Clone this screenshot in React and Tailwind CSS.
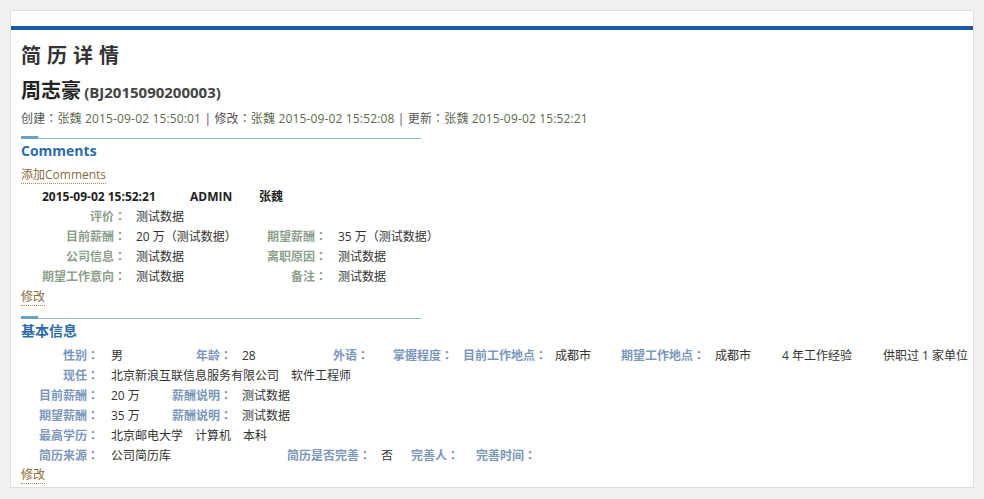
import React from 'react';

const font = { fontFamily: '"Open Sans", "Noto Sans CJK SC", sans-serif' };

// centred full-width colon, like the reference's Windows font
const C = () => (
  <span className="leading-[0]" style={{ fontFamily: '"Noto Sans CJK TC", sans-serif' }}>
    ：
  </span>
);

const Divider = () => (
  <div className="flex items-end w-[400px]">
    <div className="w-[17px] h-[3px] bg-[#6b9fcb]" />
    <div className="flex-1 h-px bg-[#8db5d6]" />
  </div>
);

// cell helpers for the table-like rows
const L = ({ w, c, children }) => (
  <span className={`shrink-0 text-right font-bold whitespace-nowrap ${c}`} style={{ width: w }}>
    {children}
    <C />
  </span>
);

const V = ({ w, pl = 10, children }) => (
  <span className="shrink-0 text-[#333] whitespace-nowrap" style={{ width: w, paddingLeft: pl }}>
    {children}
  </span>
);

const Row = ({ children }) => <div className="flex h-[20px] leading-[20px]">{children}</div>;

const cmt = 'text-[#8e9f8c]';
const base = 'text-[#7c97bc]';

const App = () => {
  return (
    <div className="h-[499px] bg-[#f0f0f0] px-[10px] pt-[10px] text-[12px]" style={font}>
      <div className="h-[478px] bg-white border border-[#dedede] pt-[15px] overflow-hidden">
        <div className="h-[4px] bg-[#1a5aa6]" />

        <div className="px-[10px]">
          <h1 className="mt-[13px] text-[20px] leading-[26px] font-bold tracking-[6px] text-[#333]">简历详情</h1>

          <div className="mt-[8px] leading-[28px] text-[#222]">
            <span className="text-[20px] font-bold">周志豪</span>{' '}
            <span className="text-[15px] font-bold text-[#444]">(BJ2015090200003)</span>
          </div>

          <div className="mt-[2px] h-[18px] leading-[18px] text-[#555] tracking-[0.15px]">
            创建<C /><span className="text-[#5b6a4d]">张魏 2015-09-02 15:50:01</span>{' '}
            <span className="text-[#5b3b6b]">|</span> 修改<C /><span className="text-[#5b6a4d]">张魏 2015-09-02 15:52:08</span>{' '}
            <span className="text-[#5b3b6b]">|</span> 更新<C /><span className="text-[#5b6a4d]">张魏 2015-09-02 15:52:21</span>
          </div>

          {/* Comments */}
          <div className="mt-[8px]">
            <Divider />
          </div>
          <h2 className="mt-[2px] text-[14px] leading-[20px] font-bold text-[#2d6ca6]">Comments</h2>
          <div className="mt-[5px] h-[18px] leading-[18px]">
            <a className="text-[#8b6b3d] border-b border-dotted border-[#b08a4a] cursor-pointer">添加Comments</a>
          </div>

          <div className="mt-[3px] flex h-[20px] leading-[20px] font-bold text-[#222] pl-[21px]">
            <span className="w-[148px]">2015-09-02 15:52:21</span>
            <span className="w-[69px]">ADMIN</span>
            <span>张魏</span>
          </div>
          <div>
            <Row>
              <L w={105} c={cmt}>评价</L>
              <V>测试数据</V>
            </Row>
            <Row>
              <L w={105} c={cmt}>目前薪酬</L>
              <V w={141}>20 万（测试数据）</V>
              <L w={60} c={cmt}>期望薪酬</L>
              <V pl={11}>35 万（测试数据）</V>
            </Row>
            <Row>
              <L w={105} c={cmt}>公司信息</L>
              <V w={141}>测试数据</V>
              <L w={60} c={cmt}>离职原因</L>
              <V pl={11}>测试数据</V>
            </Row>
            <Row>
              <L w={105} c={cmt}>期望工作意向</L>
              <V w={141}>测试数据</V>
              <L w={60} c={cmt}>备注</L>
              <V pl={11}>测试数据</V>
            </Row>
            <div className="h-[20px] leading-[20px]">
              <a className="text-[#8b6b3d] border-b border-dotted border-[#b08a4a] cursor-pointer">修改</a>
            </div>
          </div>

          {/* 基本信息 */}
          <div className="mt-[9px]">
            <Divider />
          </div>
          <h2 className="mt-[2px] text-[14px] leading-[20px] font-bold text-[#2d6ca6]">基本信息</h2>

          <div className="mt-[5px]">
            <Row>
              <L w={78} c={base}>性别</L>
              <V w={73} pl={12}>男</V>
              <L w={60} c={base}>年龄</L>
              <V w={101}>28</V>
              <L w={36} c={base}>外语</L>
              <V w={24} />
              <L w={60} c={base}>掌握程度</L>
              <V w={10} />
              <L w={84} c={base}>目前工作地点</L>
              <V w={74} pl={8}>成都市</V>
              <L w={84} c={base}>期望工作地点</L>
              <V w={77}>成都市</V>
              <V w={101} pl={0}>4 年工作经验</V>
              <V pl={0}>供职过 1 家单位</V>
            </Row>
            <Row>
              <L w={78} c={base}>现任</L>
              <V pl={12}>北京新浪互联信息服务有限公司　软件工程师</V>
            </Row>
            <Row>
              <L w={78} c={base}>目前薪酬</L>
              <V w={73} pl={12}>20 万</V>
              <L w={60} c={base}>薪酬说明</L>
              <V>测试数据</V>
            </Row>
            <Row>
              <L w={78} c={base}>期望薪酬</L>
              <V w={73} pl={12}>35 万</V>
              <L w={60} c={base}>薪酬说明</L>
              <V>测试数据</V>
            </Row>
            <Row>
              <L w={78} c={base}>最高学历</L>
              <V pl={12}>北京邮电大学　计算机　本科</V>
            </Row>
            <Row>
              <L w={78} c={base}>简历来源</L>
              <V w={188} pl={12}>公司简历库</V>
              <L w={84} c={base}>简历是否完善</L>
              <V w={40}>否</V>
              <L w={48} c={base}>完善人</L>
              <V w={17} />
              <L w={60} c={base}>完善时间</L>
            </Row>
          </div>
          <div className="h-[18px] leading-[18px]">
            <a className="text-[#8b6b3d] border-b border-dotted border-[#b08a4a] cursor-pointer">修改</a>
          </div>
        </div>
      </div>
    </div>
  );
};

export default App;
